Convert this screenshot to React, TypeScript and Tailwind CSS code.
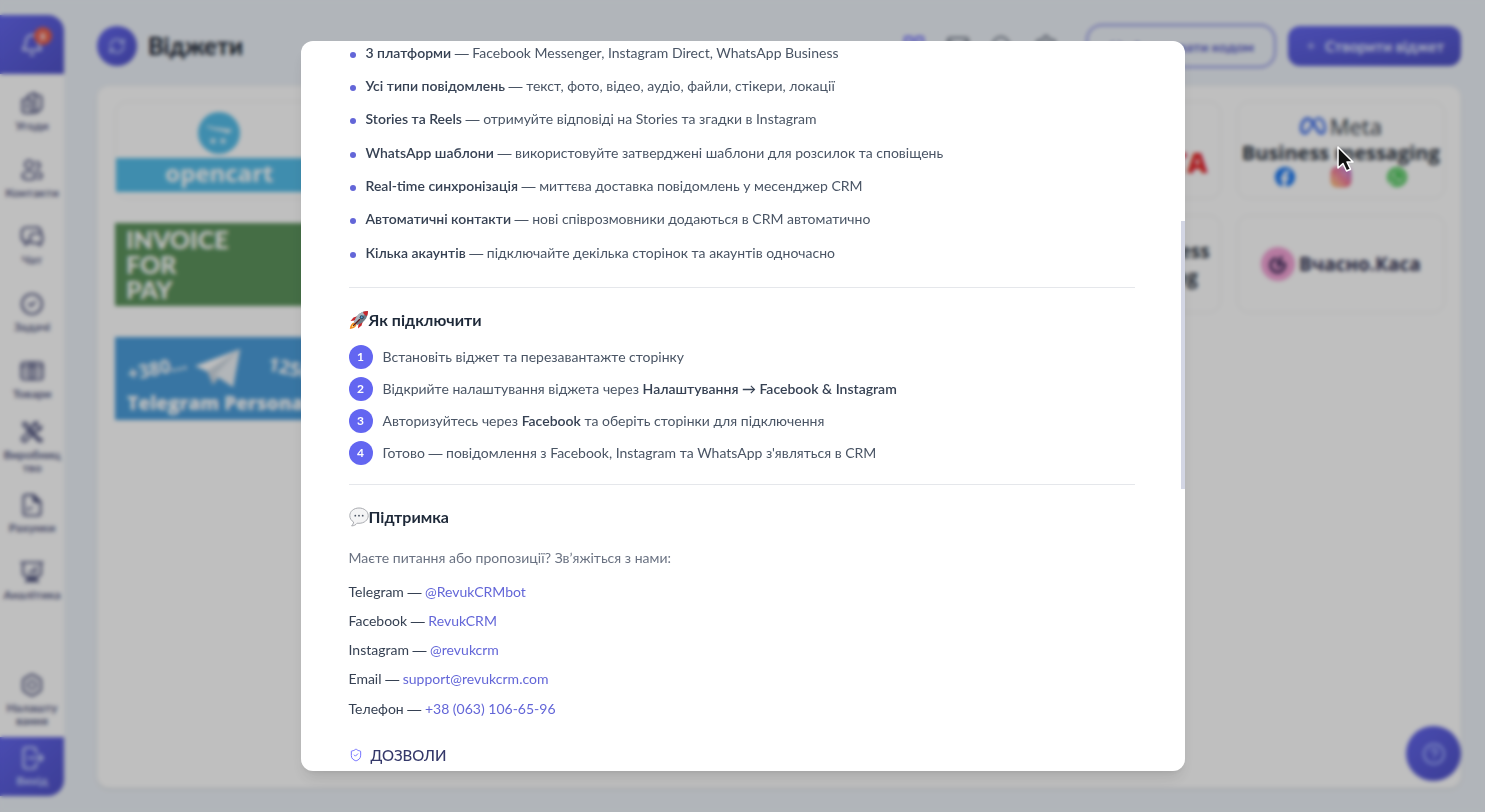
import React from 'react';
import {
  Bell,
  RefreshCw,
  CircleCheck,
  LayoutGrid,
  Mail,
  Search,
  Settings,
  Plus,
  Code,
  CircleHelp,
  ShieldCheck,
} from 'lucide-react';
import { FaMeta, FaFacebook, FaInstagram, FaWhatsapp } from 'react-icons/fa6';

const iconProps = {
  viewBox: '0 0 24 24',
  fill: 'none',
  stroke: 'currentColor',
  strokeWidth: 2.2,
  strokeLinecap: 'round' as const,
  strokeLinejoin: 'round' as const,
  className: 'w-6 h-6 shrink-0',
  'aria-hidden': true,
};

function DealsIcon() {
  return (
    <svg {...iconProps}>
      <path d="M3 8.500h8.500V22H5a2.500 2.500 0 0 1-2.500-2.500V9z" />
      <path d="M7.500 8.500V5L14 2l1.500 1v18.500h-4" />
      <path d="M15.500 4.500H19a2.500 2.500 0 0 1 2.500 2.500v9.500L19 20l-3.500 1.500" />
      <path d="M7 12.500v5" />
    </svg>
  );
}

function ContactsIcon() {
  return (
    <svg {...iconProps}>
      <circle cx="9" cy="6.500" r="4" />
      <path d="M9 13.500c-4 0-6.500 2-6.500 4.500S5 21.500 9 21.500s6.500-1 6.500-3.500-2.500-4.500-6.500-4.500z" />
      <path d="M16 4.500a3 3 0 1 1 .5 5.800M17 14c3 .3 4.800 1.700 4.800 3.700 0 1.500-1.300 2.600-3.300 3" />
    </svg>
  );
}

function ChatIcon() {
  return (
    <svg {...iconProps}>
      <path d="M8.500 16.500 5.500 20v-3.500A4 4 0 0 1 1.800 13V7A4.500 4.500 0 0 1 6.300 2.500H16A4.500 4.500 0 0 1 21 7v2" />
      <path d="M13.500 8.500h6A2.700 2.700 0 0 1 22.200 11v4.500a2.500 2.500 0 0 1-2 2.500v2.500L17.500 18h-5a2.500 2.500 0 0 1-2.500-2.500V12a3.500 3.500 0 0 1 3.500-3.500z" />
    </svg>
  );
}

function GoodsIcon() {
  return (
    <svg {...iconProps}>
      <rect x="1.500" y="3.500" width="21" height="17" rx="2.500" />
      <path d="M1.500 7.500h21M10 3.500v17M14 3.500v17" />
      <path d="M4.500 12h3M16.500 12h3M4.500 16h3M16.500 16h3" strokeWidth="1.500" />
    </svg>
  );
}

function ToolsIcon() {
  return (
    <svg {...iconProps}>
      <path d="M3 3.500 5.500 2.500 9 6v2l10 10.500 2.500.5v2.500H19L4 6z" />
      <path d="M21.500 6.500a4.500 4.500 0 0 1-6 4L6 21a2.500 2.500 0 0 1-3.500-3.500L12.500 8.500a4.500 4.500 0 0 1 5-6L15.500 5l3 3z" />
    </svg>
  );
}

function InvoiceIcon() {
  return (
    <svg {...iconProps}>
      <path d="M6 1.800h7.500L20.500 9v11a2.500 2.500 0 0 1-2.500 2.500H6A2.500 2.500 0 0 1 3.500 20V4.500A2.500 2.500 0 0 1 6 1.800z" />
      <path d="M13.500 2v4.500A2.500 2.500 0 0 0 16 9h4.500z" fill="currentColor" />
      <path d="M8 18v-3M8 15h5" strokeWidth="1.700" />
    </svg>
  );
}

function AnalyticsIcon() {
  return (
    <svg {...iconProps}>
      <path d="M1.500 2.500h21M3 2.500V13a3.500 3.500 0 0 0 3.500 3.500h11A3.500 3.500 0 0 0 21 13V2.500" />
      <path d="M6.500 21.500 9 19l3 2.500 3-2.500 2.500 2.500M8 17.500h8" strokeWidth="3" />
      <path d="M9.500 12.500v-1M12.500 12.500V10M15.500 12.500V7" />
    </svg>
  );
}

function HexSettingsIcon() {
  return (
    <svg {...iconProps}>
      <path d="M10.500 2a3 3 0 0 1 3 0l6 3.500A3 3 0 0 1 21 8v8a3 3 0 0 1-1.500 2.500l-6 3.500a3 3 0 0 1-3 0l-6-3.500A3 3 0 0 1 3 16V8a3 3 0 0 1 1.500-2.500z" />
      <circle cx="12" cy="12" r="4" />
    </svg>
  );
}

function ExitIcon() {
  return (
    <svg {...iconProps}>
      <path d="M16 7V4.500A3 3 0 0 0 13 1.500H6.500A3 3 0 0 0 3.500 4.500v15a3 3 0 0 0 3 3H13a3 3 0 0 0 3-3V17" />
      <path d="M8.500 12H23M19.500 8.500 23 12l-3.500 3.500" />
    </svg>
  );
}

const navItems = [
  { icon: DealsIcon, label: 'Угоди' },
  { icon: ContactsIcon, label: 'Контакти' },
  { icon: ChatIcon, label: 'Чат' },
  { icon: CircleCheck, label: 'Задачі' },
  { icon: GoodsIcon, label: 'Товари' },
  { icon: ToolsIcon, label: 'Виробниц тво' },
  { icon: InvoiceIcon, label: 'Рахунки' },
  { icon: AnalyticsIcon, label: 'Аналітика' },
];

const features = [
  { name: '3 платформи', text: 'Facebook Messenger, Instagram Direct, WhatsApp Business' },
  { name: 'Усі типи повідомлень', text: 'текст, фото, відео, аудіо, файли, стікери, локації' },
  { name: 'Stories та Reels', text: 'отримуйте відповіді на Stories та згадки в Instagram' },
  { name: 'WhatsApp шаблони', text: 'використовуйте затверджені шаблони для розсилок та сповіщень' },
  { name: 'Real-time синхронізація', text: 'миттєва доставка повідомлень у месенджер CRM' },
  { name: 'Автоматичні контакти', text: 'нові співрозмовники додаються в CRM автоматично' },
  { name: 'Кілька акаунтів', text: 'підключайте декілька сторінок та акаунтів одночасно' },
];

// Lato's em dash is short, so take the long one
function Dash() {
  return <span className="font-['Liberation_Sans']">—</span>;
}

const steps = [
  <>Встановіть віджет та перезавантажте сторінку</>,
  <>
    Відкрийте налаштування віджета через{' '}
    <strong className="font-semibold text-gray-700">Налаштування → Facebook &amp; Instagram</strong>
  </>,
  <>
    Авторизуйтесь через <strong className="font-semibold text-gray-700">Facebook</strong> та оберіть сторінки для
    підключення
  </>,
  <>
    Готово <Dash /> повідомлення з Facebook, Instagram та WhatsApp з'являться в CRM
  </>,
];

const contacts = [
  { name: 'Telegram', value: '@RevukCRMbot' },
  { name: 'Facebook', value: 'RevukCRM' },
  { name: 'Instagram', value: '@revukcrm' },
  { name: 'Email', value: 'support@revukcrm.com' },
  { name: 'Телефон', value: '+38 (063) 106-65-96' },
];

function RocketIcon() {
  return (
    <svg viewBox="0 0 20 20" className="w-5 h-5 shrink-0" aria-hidden="true">
      <path d="M9 6 4.500 7.500 1.500 11l4-.5z" fill="#c8282d" />
      <path d="M14 11l-1.500 4.500L9 18.500l.4-4z" fill="#c8282d" />
      <path d="M5 12.500C2.500 13 1.200 15.500.8 19c3.500-.3 6-1.600 6.700-4z" fill="#f08a1d" />
      <path d="M5 14c-1.300.6-2 1.800-2.300 3.300 1.600-.2 2.700-.9 3.300-2.100z" fill="#ffe07a" />
      <path d="M19 1c-5.500.2-9.500 2.500-12.200 7L5 12l3 3 4-1.800C16.600 10.500 18.800 6.500 19 1z" fill="#6d7b86" />
      <path d="M19 1C13.500 1.200 9.500 3.500 6.800 8L5 12l1.500 1.500L16.500 3.500z" fill="#a9b5be" />
      <path d="M19 1c-1.900.1-3.500.4-5 1 .5 2 1.900 3.500 4 4 .6-1.500.9-3.200 1-5z" fill="#c8282d" />
      <circle cx="12.700" cy="7.300" r="2" fill="#27465c" />
      <circle cx="12.700" cy="7.300" r="1" fill="#5aa4d6" />
      <path d="M10.500 9.500 4.500 15.500" stroke="#5b1b1e" strokeWidth="1.200" strokeLinecap="round" />
    </svg>
  );
}

function BubbleIcon() {
  return (
    <svg viewBox="0 0 20 20" className="w-5 h-5 shrink-0" aria-hidden="true">
      <path
        d="M10 1C4.800 1 .8 4.300.8 8.700c0 2.700 1.500 5 3.800 6.300-.1 1.500-.8 2.800-2 3.900 2.300-.1 4.200-1 5.500-2.700l1.900.1c5.200 0 9.200-3.200 9.200-7.600S15.200 1 10 1z"
        fill="#f4f4f5"
        stroke="#a9abb0"
        strokeWidth="1"
      />
      <circle cx="6.300" cy="8.700" r="0.900" fill="#4b5563" />
      <circle cx="10" cy="8.700" r="0.900" fill="#4b5563" />
      <circle cx="13.700" cy="8.700" r="0.900" fill="#4b5563" />
    </svg>
  );
}

function Sidebar() {
  return (
    <aside className="w-16 shrink-0 flex flex-col bg-white rounded-r-2xl overflow-hidden text-[#5a5e86]">
      <button
        aria-label="Сповіщення"
        className="relative h-[59px] shrink-0 flex items-center justify-center bg-gradient-to-br from-[#6366ec] to-[#5052c8] text-indigo-100"
      >
        <Bell className="w-6 h-6" strokeWidth={2} />
        <span className="absolute top-3 right-3 w-[18px] h-[18px] rounded-full bg-[#e8604d] text-white text-[10px] font-bold leading-[18px] text-center">
          8
        </span>
      </button>
      <nav className="pt-1 pb-1 flex-1 flex flex-col">
        {navItems.map((item) => {
          const Icon = item.icon;
          return (
            <a key={item.label} href="#" className="h-[67px] px-0.5 flex flex-col items-center justify-center gap-1">
              <Icon className="w-6 h-6 shrink-0" strokeWidth={2.2} />
              <span className="text-[12px] leading-[13px] font-bold text-center">{item.label}</span>
            </a>
          );
        })}
        <a href="#" className="mt-auto h-[67px] px-0.5 flex flex-col items-center justify-center gap-1">
          <HexSettingsIcon />
          <span className="text-[12px] leading-[13px] font-bold text-center">
            Налашту
            <br />
            вання
          </span>
        </a>
      </nav>
      <a
        href="#"
        className="h-[59px] shrink-0 flex flex-col items-center justify-center gap-1 bg-gradient-to-br from-[#6366ec] to-[#5052c8] text-indigo-200"
      >
        <ExitIcon />
        <span className="text-[12px] leading-[13px] font-bold">Вихід</span>
      </a>
    </aside>
  );
}

function Header() {
  return (
    <header className="h-11 flex items-center">
      <button
        aria-label="Оновити"
        className="w-10 h-10 rounded-full flex items-center justify-center bg-gradient-to-br from-[#6366ec] to-[#5052c8] text-indigo-200"
      >
        <RefreshCw className="w-[18px] h-[18px]" />
      </button>
      <h1 className="ml-[11px] text-[24px] leading-8 font-bold text-gray-900">Віджети</h1>
      <div className="ml-auto flex items-center gap-5 mr-7 text-gray-500">
        <LayoutGrid className="w-6 h-6 text-indigo-500" />
        <Mail className="w-6 h-6" />
        <Search className="w-6 h-6" />
        <Settings className="w-6 h-6" />
      </div>
      <button className="w-[190px] h-11 flex items-center justify-center gap-2 rounded-2xl border-2 border-[#8f93e6] text-[14px] font-bold text-[#5c5fc9]">
        <Code className="w-4 h-4" />
        Активувати кодом
      </button>
      <button className="ml-3 w-[173px] h-10 flex items-center justify-center gap-2 rounded-xl bg-gradient-to-br from-[#6366ec] to-[#4e51c3] text-[15px] font-bold text-indigo-100">
        <Plus className="w-3 h-3" />
        Створити віджет
      </button>
    </header>
  );
}

function WidgetGrid() {
  return (
    <section className="mt-[18px] flex-1 bg-white rounded-xl shadow-sm pt-[15px] pl-[18px] pr-4">
      <div className="grid grid-cols-6 gap-4">
        <a href="#" className="h-[98px] rounded-xl border border-gray-200/60 flex flex-col items-center pt-[10px]">
          <svg viewBox="0 0 42 42" className="w-[42px] h-[42px] shrink-0" aria-hidden="true">
            <circle cx="21" cy="21" r="21" fill="#55bde9" />
            <path d="M8 13c4 2.500 12 3 26 4.500-1 2-3 3-5 4.500 0-3-8-3-15-5-3-1-5-2-6-4z" fill="#e8f6fc" />
            <circle cx="15" cy="29" r="2.500" fill="#e8f6fc" />
            <circle cx="25" cy="29" r="2.500" fill="#e8f6fc" />
          </svg>
          <span className="mt-1 w-full h-[34px] bg-[#55bde9] text-white font-['Open_Sans'] font-bold text-[24px] leading-[30px] text-center">
            opencart
          </span>
        </a>
        <div className="col-span-3" />
        <a href="#" className="h-[98px] rounded-xl border border-gray-200/60 flex items-end justify-end pr-3 pb-5 text-[28px] leading-8 font-black font-['Open_Sans'] text-[#e5262b]">
          POSHTA
        </a>
        <a href="#" className="h-[98px] pb-px rounded-xl border border-gray-200/60 flex flex-col items-center justify-center font-['Open_Sans'] text-[#2c3440]">
          <span className="flex items-center gap-1 text-[22px] leading-6 font-medium">
            <FaMeta className="w-[26px] h-[26px] text-[#2f63e8]" />
            Meta
          </span>
          <span className="text-[20px] leading-7 font-bold whitespace-nowrap">Business messaging</span>
          <span className="flex gap-9">
            <FaFacebook className="w-5 h-5 text-[#1877f2]" />
            <span className="w-5 h-5 rounded-md bg-gradient-to-tr from-[#fdc04c] via-[#ee4a70] to-[#a045d8] flex items-center justify-center text-white">
              <FaInstagram className="w-4 h-4" />
            </span>
            <span className="w-5 h-5 rounded-full bg-[#3cc04a] flex items-center justify-center text-white">
              <FaWhatsapp className="w-4 h-4" />
            </span>
          </span>
        </a>

        <a href="#" className="h-[98px] flex items-center">
          <span className="w-full h-[83px] px-[11px] py-1 bg-[#5c935d] text-white text-[25px] leading-[25px] font-black">
            INVOICE
            <br />
            FOR
            <br />
            PAY
          </span>
        </a>
        <div className="col-span-3" />
        <a href="#" className="h-[98px] rounded-xl border border-gray-200/60 flex flex-col items-end justify-center pr-[10px] font-['Open_Sans'] text-[19px] leading-[26px] font-bold text-[#2c3440]">
          <span>Business</span>
          <span className="pr-3">messaging</span>
        </a>
        <a href="#" className="h-[98px] rounded-xl border border-gray-200/60 flex items-center justify-center gap-1 font-['Open_Sans'] text-[19px] font-bold text-[#2f3050]">
          <svg viewBox="0 0 34 34" className="w-[34px] h-[34px] shrink-0" aria-hidden="true">
            <circle cx="17" cy="17" r="17" fill="#f3a3d6" />
            <path d="M14.500 11.500a7 7 0 1 0 9 5h-6v3.500M20.500 10.500l-4 5" fill="none" stroke="#2f2450" strokeWidth="2.600" strokeLinecap="round" />
          </svg>
          Вчасно.Каса
        </a>

        <a href="#" className="h-[98px] flex items-center">
          <span className="w-full h-[83px] px-3 pt-3 bg-[#4b9dda] text-white font-['Open_Sans'] font-bold overflow-hidden">
            <span className="flex items-center gap-2 text-[19px] leading-[38px]">
              <span className="-rotate-12">+380...</span>
              <svg viewBox="0 0 46 38" className="w-[46px] h-[38px] shrink-0" aria-hidden="true">
                <path d="M0 17 45 0 38 38 20 26z" fill="#fff" />
                <path d="M12 22 45 0 18 36z" fill="#cfd9e2" />
                <path d="M45 0 20 26 38 38z" fill="#eef3f7" />
              </svg>
              <span className="ml-auto rotate-12">1250</span>
            </span>
            <span className="mt-1 block text-[19px] leading-6 font-extrabold whitespace-nowrap">Telegram Personal</span>
          </span>
        </a>
      </div>
    </section>
  );
}

function WidgetDialog() {
  return (
    <div
      role="dialog"
      aria-modal="true"
      className="relative w-full max-w-[884px] h-[90vh] overflow-hidden rounded-xl bg-white shadow-lg pl-12 pr-[50px] pt-px text-[14px] leading-[21px] text-gray-600"
    >
      <ul className="min-h-[222px] flex flex-col justify-between">
        {features.map((feature) => (
          <li key={feature.name} className="flex items-center gap-[10px]">
            <span className="mt-1 ml-px w-1.5 h-1.5 rounded-full bg-[#6366d8]" />
            <span>
              <strong className="font-semibold text-gray-700">{feature.name}</strong> <Dash /> {feature.text}
            </span>
          </li>
        ))}
      </ul>

      <hr className="mt-[23px] border-gray-200" />
      <h2 className="mt-5 flex items-center text-[16px] leading-6 font-bold text-gray-800">
        <RocketIcon />
        Як підключити
      </h2>
      <ol className="mt-[13px] flex flex-col gap-2">
        {steps.map((step, index) => (
          <li key={index} className="flex items-center gap-[10px]">
            <span className="w-6 h-6 shrink-0 rounded-full bg-[#6366f1] text-white text-[12px] leading-6 font-bold text-center">
              {index + 1}
            </span>
            <span>{step}</span>
          </li>
        ))}
      </ol>

      <hr className="mt-[19px] border-gray-200" />
      <h2 className="mt-5 flex items-center text-[16px] leading-6 font-bold text-gray-800">
        <BubbleIcon />
        Підтримка
      </h2>
      <p className="mt-[18px] text-gray-500">Маєте питання або пропозиції? Звʼяжіться з нами:</p>
      <ul className="mt-[13px] min-h-[139px] flex flex-col justify-between text-gray-700">
        {contacts.map((contact) => (
          <li key={contact.name}>
            {contact.name} <Dash />{' '}
            <a href="#" className="text-[#6366d8]">
              {contact.value}
            </a>
          </li>
        ))}
      </ul>

      <h3 className="mt-[23px] flex items-center gap-2 text-[15px] leading-6 font-medium text-[#34386a]">
        <ShieldCheck className="w-[14px] h-[14px] text-indigo-500" strokeWidth={1.5} />
        ДОЗВОЛИ
      </h3>

      <span className="absolute right-0 top-[180px] w-1 h-[268px] bg-[#d3d6e4]" />
    </div>
  );
}

export default function App() {
  return (
    <div className="relative h-screen overflow-hidden bg-[#edf2f8] font-['Lato','Open_Sans',sans-serif]">
      <div className="h-full flex pt-[15px] pb-4">
        <Sidebar />
        <main className="flex-1 min-w-0 ml-[33px] mr-6 pt-[9px] pb-2 flex flex-col">
          <Header />
          <WidgetGrid />
        </main>
      </div>
      <button
        aria-label="Допомога"
        className="absolute right-6 bottom-[31px] w-[55px] h-[55px] rounded-full flex items-center justify-center bg-gradient-to-br from-[#6366ec] to-[#5052c8] text-indigo-300"
      >
        <CircleHelp className="w-6 h-6" />
      </button>

      <div className="absolute inset-0 flex items-center justify-center bg-black/25 backdrop-blur-[2px]">
        <WidgetDialog />
      </div>

      <svg viewBox="0 0 18 28" className="absolute left-[1336px] top-[145px] w-[18px] h-7" aria-hidden="true">
        <path d="M2 2v21l5-4.500 3.500 7.500 4-1.800-3.500-7.200h6z" fill="#111" stroke="#fff" strokeWidth="1.500" strokeLinejoin="round" />
      </svg>
    </div>
  );
}
